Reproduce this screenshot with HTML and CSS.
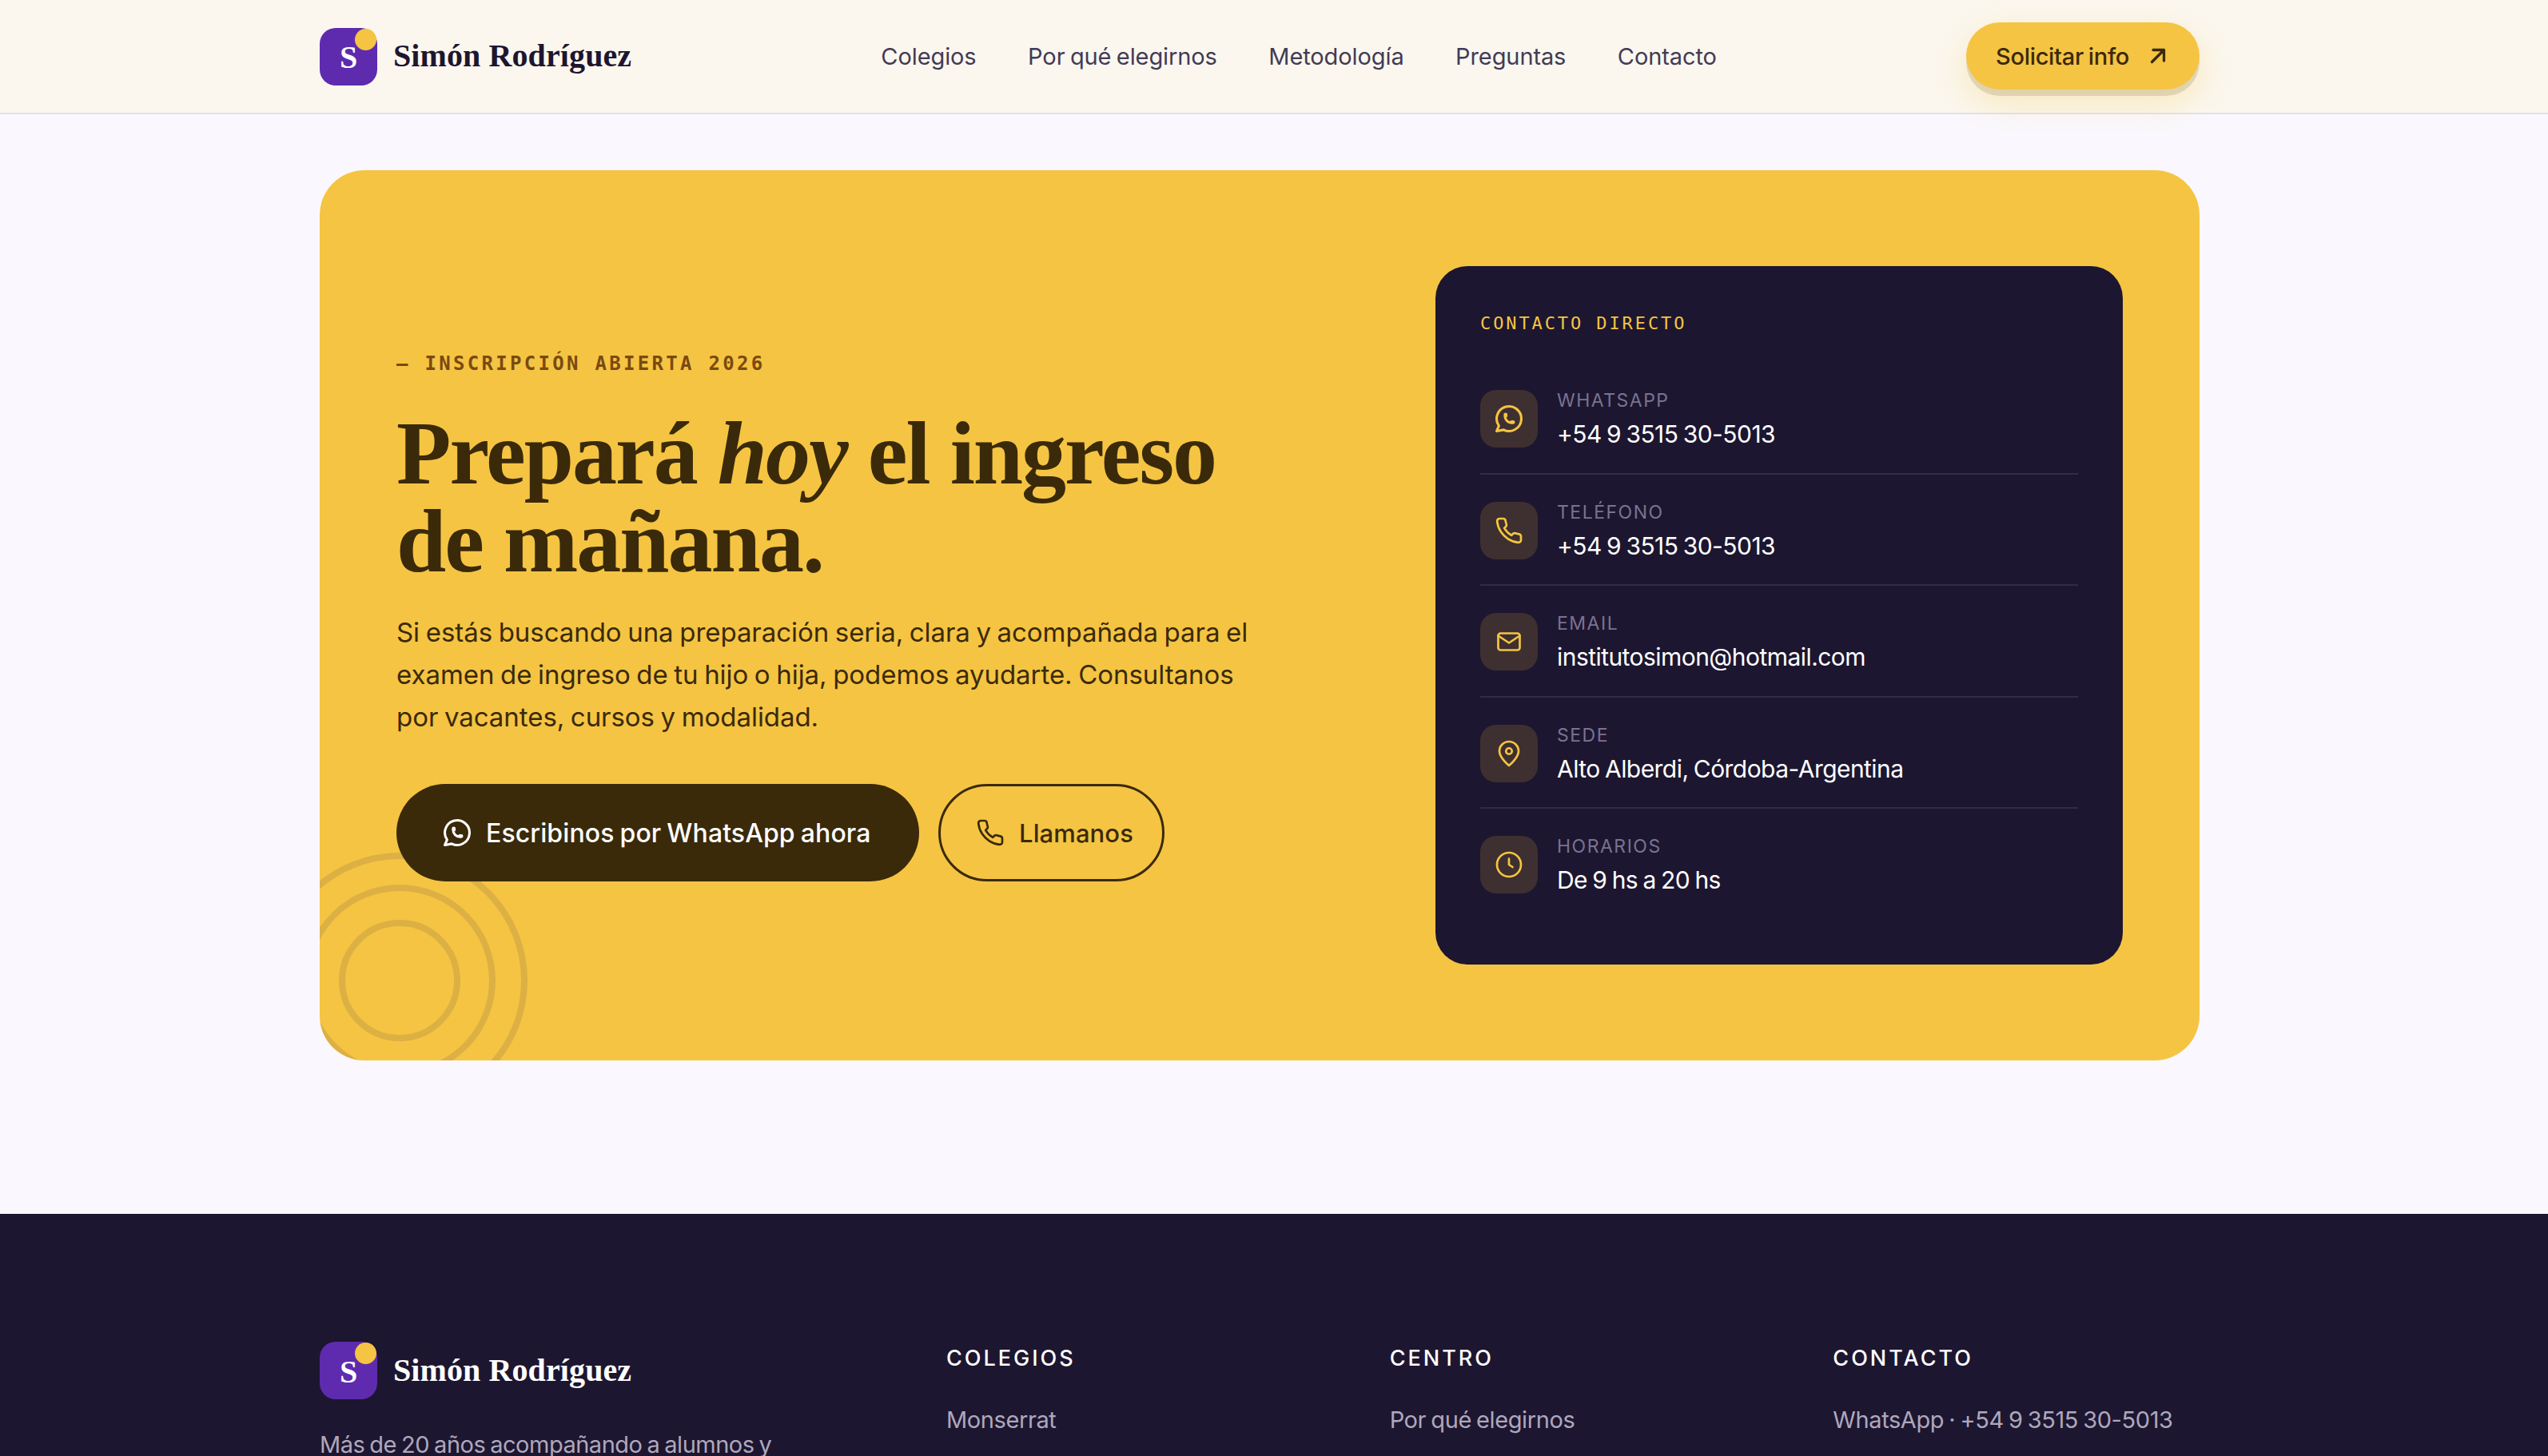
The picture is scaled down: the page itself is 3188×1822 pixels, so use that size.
FILE: index.html
```html
<!DOCTYPE html>
<html lang="es">
<head>
<meta charset="utf-8">
<title>Simón Rodríguez</title>
<link rel="stylesheet" href="styles.css">
</head>
<body>
<header class="nav">
  <div class="wrap nav-in">
    <a class="brand"><span class="mark"><span class="mark-s">S</span><span class="mark-dot"></span></span><span class="brand-name">Simón Rodríguez</span></a>
    <nav class="links">
      <a>Colegios</a><a>Por qué elegirnos</a><a>Metodología</a><a>Preguntas</a><a>Contacto</a>
    </nav>
    <a class="cta">Solicitar info
      <svg class="cta-ico" viewBox="0 0 24 24"><path d="M7 17 17 7M8 7h9v9"/></svg>
    </a>
  </div>
</header>
<main class="main">
  <section class="wrap">
    <div class="hero">
      <svg class="rings" viewBox="0 0 260 260"><circle cx="100" cy="160" r="72"/><circle cx="100" cy="160" r="116"/><circle cx="100" cy="160" r="156"/></svg>
      <div class="hero-left">
        <p class="eyebrow">— INSCRIPCIÓN ABIERTA 2026</p>
        <h1 class="title">Prepará <em>hoy</em> el ingreso de mañana.</h1>
        <p class="lead">Si estás buscando una preparación seria, clara y acompañada para el examen de ingreso de tu hijo o hija, podemos ayudarte. Consultanos por vacantes, cursos y modalidad.</p>
        <div class="actions">
          <a class="btn btn-dark"><svg class="btn-ico" viewBox="1.500 1.500 21 21"><path d="M3 21l1.650-3.800a9 9 0 1 1 3.400 2.900L3 21"/><path d="M9 10a.5.5 0 0 0 1 0V9a.5.5 0 0 0-1 0v1a5 5 0 0 0 5 5h1a.5.5 0 0 0 0-1h-1a.5.5 0 0 0 0 1"/></svg>Escribinos por WhatsApp ahora</a>
          <a class="btn btn-line"><svg class="btn-ico" viewBox="0 0 24 24"><path d="M22 16.920v3a2 2 0 0 1-2.180 2 19.800 19.800 0 0 1-8.630-3.070 19.500 19.500 0 0 1-6-6 19.800 19.800 0 0 1-3.070-8.670A2 2 0 0 1 4.110 2h3a2 2 0 0 1 2 1.720c.13.96.36 1.900.7 2.810a2 2 0 0 1-.45 2.110L8.090 9.910a16 16 0 0 0 6 6l1.270-1.270a2 2 0 0 1 2.110-.45c.91.34 1.850.57 2.810.7A2 2 0 0 1 22 16.920z"/></svg>Llamanos</a>
        </div>
      </div>
      <aside class="panel">
        <p class="panel-title">CONTACTO DIRECTO</p>
        <ul class="rows">
          <li class="row"><span class="ico"><svg viewBox="1.500 1.500 21 21"><path d="M3 21l1.650-3.800a9 9 0 1 1 3.400 2.900L3 21"/><path d="M9 10a.5.5 0 0 0 1 0V9a.5.5 0 0 0-1 0v1a5 5 0 0 0 5 5h1a.5.5 0 0 0 0-1h-1a.5.5 0 0 0 0 1"/></svg></span><div><p class="lbl">WHATSAPP</p><p class="val">+54 9 3515 30-5013</p></div></li>
          <li class="row"><span class="ico"><svg viewBox="0 0 24 24"><path d="M22 16.920v3a2 2 0 0 1-2.180 2 19.800 19.800 0 0 1-8.630-3.070 19.500 19.500 0 0 1-6-6 19.800 19.800 0 0 1-3.070-8.670A2 2 0 0 1 4.110 2h3a2 2 0 0 1 2 1.720c.13.96.36 1.900.7 2.810a2 2 0 0 1-.45 2.110L8.090 9.910a16 16 0 0 0 6 6l1.270-1.270a2 2 0 0 1 2.110-.45c.91.34 1.850.57 2.810.7A2 2 0 0 1 22 16.920z"/></svg></span><div><p class="lbl">TELÉFONO</p><p class="val">+54 9 3515 30-5013</p></div></li>
          <li class="row"><span class="ico"><svg viewBox="0 0 24 24"><rect x="3" y="5" width="18" height="14" rx="2"/><path d="m3 7 9 6 9-6"/></svg></span><div><p class="lbl">EMAIL</p><p class="val">institutosimon@hotmail.com</p></div></li>
          <li class="row"><span class="ico"><svg viewBox="0 0 24 24"><path d="M12 22s-8-6.500-8-12a8 8 0 0 1 16 0c0 5.500-8 12-8 12z"/><circle cx="12" cy="10" r="2.500"/></svg></span><div><p class="lbl">SEDE</p><p class="val">Alto Alberdi, Córdoba-Argentina</p></div></li>
          <li class="row"><span class="ico"><svg viewBox="0 0 24 24"><circle cx="12" cy="12" r="10"/><path d="M12 7v5l3 2"/></svg></span><div><p class="lbl">HORARIOS</p><p class="val">De 9 hs a 20 hs</p></div></li>
        </ul>
      </aside>
    </div>
  </section>
</main>
<footer class="foot">
  <div class="wrap foot-grid">
    <div>
      <a class="brand brand-foot"><span class="mark"><span class="mark-s">S</span><span class="mark-dot"></span></span><span class="brand-name">Simón Rodríguez</span></a>
      <p class="foot-text">Más de 20 años acompañando a alumnos y familias.</p>
    </div>
    <div><h4 class="foot-h">COLEGIOS</h4><a class="foot-a">Monserrat</a></div>
    <div><h4 class="foot-h">CENTRO</h4><a class="foot-a">Por qué elegirnos</a></div>
    <div><h4 class="foot-h">CONTACTO</h4><a class="foot-a">WhatsApp · +54 9 3515 30-5013</a></div>
  </div>
</footer>
</body>
</html>
```
FILE: styles.css
```css
*{box-sizing:border-box}
html,body{margin:0;height:100%}
body{height:100vh;overflow:hidden;background:#FAF8FE;font-family:Inter,"Open Sans",sans-serif;color:#1D1630;word-spacing:-.1em}
p,h1,h4,ul{margin:0;padding:0}
ul{list-style:none}
.wrap{width:2352px;margin-left:400px}
.nav{height:143px;background:#FBF7EE;border-bottom:2px solid #E4E0EC;position:relative;z-index:1}
.nav-in{height:141px;display:flex;justify-content:space-between;align-items:center}
.brand{display:flex;align-items:center;gap:20px}
.mark{width:72px;height:72px;border-radius:20px;background:#5E2BAE;position:relative;display:flex;align-items:center;justify-content:center}
.mark-s{font-family:"Liberation Serif",serif;font-weight:700;font-size:40px;color:#fff;margin-top:2px}
.mark-dot{position:absolute;top:1px;right:1px;width:27px;height:27px;border-radius:50%;background:#F5C443}
.brand-name{font-family:"Liberation Serif",serif;font-weight:700;font-size:40px;letter-spacing:.1px;word-spacing:0;color:#1D1630;margin-top:-2px}
.links{display:flex;gap:64.500px;font-size:29px;letter-spacing:-.1px;color:#423B55}
.cta{width:292px;height:84px;margin-top:-1px;padding-left:37px;border-radius:42px;background:#F5C443;color:#3A2A0A;font-size:29px;font-weight:500;letter-spacing:-.3px;display:flex;align-items:center;gap:18px;box-shadow:0 8px 0 rgba(58,42,10,.13),0 16px 40px rgba(245,196,67,.3)}
.cta-ico{width:36px;height:36px;fill:none;stroke:#3A2A0A;stroke-width:2.200;stroke-linecap:round;stroke-linejoin:round}
.main{height:1376px;padding-top:70px}
.hero{position:relative;overflow:hidden;height:1114px;border-radius:56px;background:#F5C443;padding:120px 96px;display:grid;grid-template-columns:1fr 860px;gap:80px;align-items:center}
.rings{position:absolute;left:0;bottom:0;width:260px;height:260px;fill:none;stroke:#DDB044;stroke-width:8}
.hero-left{position:relative;padding-top:4px}
.eyebrow{font-family:"DejaVu Sans Mono",monospace;font-weight:700;font-size:24px;letter-spacing:3.300px;word-spacing:0;color:#7A4A10;margin-bottom:43px}
.title{font-family:"Liberation Serif",serif;font-weight:700;font-size:112px;line-height:110px;letter-spacing:-2px;word-spacing:0;color:#3A2A0A;width:1100px}
.title em{font-style:italic}
.lead{margin-top:33px;font-size:33px;line-height:53px;letter-spacing:-.05px;color:#3A2A0A;width:1080px}
.actions{display:flex;gap:24px;margin-top:57px}
.btn{height:122px;border-radius:61px;display:flex;align-items:center;font-size:32px;font-weight:500;letter-spacing:.1px}
.btn-dark{background:#3A2A0A;color:#fff;width:654px;padding-left:58px;gap:18px}
.btn-line{border:3px solid #3A2A0A;color:#3A2A0A;width:283px;padding-left:44px;gap:18px;font-size:31px}
.btn-ico{width:36px;height:36px;fill:none;stroke:currentColor;stroke-width:1.800;stroke-linecap:round;stroke-linejoin:round}
.panel{position:relative;height:874px;border-radius:40px;background:#1D1630;padding:56px}
.panel-title{font-family:"DejaVu Sans Mono",monospace;font-size:22px;letter-spacing:2.900px;word-spacing:0;color:#F5C443;margin-bottom:33px;line-height:32px}
.row{display:flex;align-items:flex-start;gap:24px;padding:34px 0 0;height:139.500px;border-bottom:2px solid #332C46}
.row:last-child{border-bottom:0}
.ico{flex:none;width:72px;height:72px;border-radius:20px;background:#3E3030;display:flex;align-items:center;justify-content:center}
.ico svg{width:36px;height:36px;fill:none;stroke:#F5C443;stroke-width:1.800;stroke-linecap:round;stroke-linejoin:round}
.lbl{font-size:23px;line-height:26px;letter-spacing:1.500px;color:#7A7390}
.val{margin-top:8px;font-size:30px;line-height:42px;letter-spacing:-.55px;color:#fff}
.foot{height:400px;background:#1D1630;padding-top:160px}
.foot-grid{display:grid;grid-template-columns:1.500fr 1fr 1fr 1fr;gap:96px}
.brand-foot .brand-name{color:#fff}
.foot-text{margin-top:34px;max-width:590px;font-size:29px;line-height:46px;letter-spacing:-.5px;color:#AEA8BD}
.foot-h{font-size:27px;font-weight:500;letter-spacing:3px;line-height:34px;color:#fff;margin-top:4px}
.foot-a{display:block;margin-top:42px;font-size:29px;letter-spacing:-.4px;color:#AEA8BD}
```
